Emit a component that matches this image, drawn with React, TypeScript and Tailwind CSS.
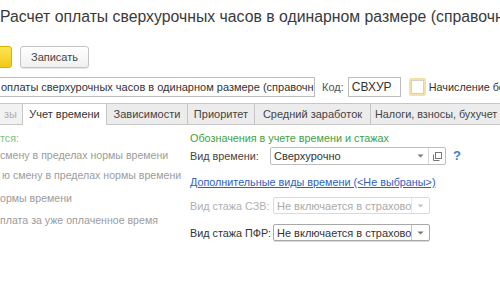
import React from "react";

function Arrow({ color = "#777" }: { color?: string }) {
  return (
    <svg width="7" height="4" viewBox="0 0 7 4">
      <path d="M0.5 0.5 L3.5 3.5 L6.5 0.5 Z" fill={color} />
    </svg>
  );
}

function OpenIcon() {
  return (
    <svg width="11" height="11" viewBox="0 0 11 11" fill="none" stroke="#777" strokeWidth="1">
      <rect x="3.5" y="1.5" width="6" height="6" />
      <path d="M1.5 3.5 V9.5 H7.5" />
    </svg>
  );
}

export default function App() {
  return (
    <div className="w-[500px] h-[300px] overflow-hidden bg-white text-[#333] font-['Liberation_Sans',Arial,sans-serif]">
      {/* Title */}
      <div className="pt-[7px] h-[27px] text-[15.8px] leading-[20px] whitespace-nowrap text-[#3a3a3a]">
        Расчет оплаты сверхурочных часов в одинарном размере (справочно)
      </div>

      {/* Buttons */}
      <div className="mt-[19px] flex items-center h-[22px]">
        <div className="shrink-0 -ml-px w-[13px] h-[22px] rounded-r-[3px] border border-[#d4b300] bg-gradient-to-b from-[#ffe44f] to-[#f2c811]" />
        <div className="shrink-0 ml-[8px] w-[69px] h-[22px] rounded-[3px] border border-[#c4c4c4] bg-gradient-to-b from-white to-[#f0f0f0] text-[11px] text-[#444] flex items-center justify-center shadow-[0_1px_1px_rgba(0,0,0,0.1)]">
          Записать
        </div>
      </div>

      {/* Name row */}
      <div className="mt-[9px] flex items-center h-[20px] text-[11px] whitespace-nowrap">
        <div className="shrink-0 -ml-[1px] w-[316px] h-[20px] border border-[#bdbdbd] pl-[1px] overflow-hidden leading-[18px] text-[#333]">
          оплаты сверхурочных часов в одинарном размере (справочно)
        </div>
        <div className="shrink-0 ml-[7px] text-[#555]">Код:</div>
        <div className="shrink-0 ml-[4px] w-[53px] h-[20px] border border-[#bdbdbd] pl-[3px] leading-[18px] text-[#333] text-[12px]">
          СВХУР
        </div>
        <div className="shrink-0 ml-[8px] w-[17px] h-[18px] rounded-[2px] border-2 border-[#f3e2a4] bg-white flex items-center justify-center">
          <div className="w-[13px] h-[14px] border border-[#d0d0d0] bg-white" />
        </div>
        <div className="shrink-0 ml-[3px] text-[#333] text-[10.8px]">Начисление больничных</div>
      </div>

      {/* Tabs */}
      <div className="mt-[6px] flex h-[22px] text-[11px] whitespace-nowrap">
        <div className="shrink-0 w-[23px] h-[22px] border-y border-r border-[#c6c6c6] bg-[#f2f2f2] text-[#b0b0b0] flex items-center justify-end pr-[5px]">
          зы
        </div>
        <div className="shrink-0 w-[84px] h-[22px] border-t border-r border-[#c6c6c6] bg-white flex items-center justify-center text-[#333]">
          Учет времени
        </div>
        <div className="shrink-0 w-[81px] h-[22px] border-y border-r border-[#c6c6c6] bg-[#ececec] flex items-center justify-center text-[#444]">
          Зависимости
        </div>
        <div className="shrink-0 w-[67px] h-[22px] border-y border-r border-[#c6c6c6] bg-[#ececec] flex items-center justify-center text-[#444]">
          Приоритет
        </div>
        <div className="shrink-0 w-[116px] h-[22px] border-y border-r border-[#c6c6c6] bg-[#ececec] flex items-center justify-center text-[#444]">
          Средний заработок
        </div>
        <div className="shrink-0 w-[140px] h-[22px] border-y border-r border-[#c6c6c6] bg-[#ececec] flex items-center pl-[4px] text-[#444] text-[10.8px]">
          Налоги, взносы, бухучет
        </div>
      </div>

      {/* Content */}
      <div className="flex leading-[14px]">
        <div className="w-[190px] shrink-0 whitespace-nowrap text-[#9c9c9c] text-[10.6px]">
          <div className="mt-[6px] text-[#7cc27c] text-[10.8px]">тся:</div>
          <div className="mt-[3px]">смену в пределах нормы времени</div>
          <div className="mt-[6px] ml-[2px]">ю смену в пределах нормы времени</div>
          <div className="mt-[9px]">ормы времени</div>
          <div className="mt-[8px]">плата за уже оплаченное время</div>
        </div>

        <div className="flex-1 whitespace-nowrap text-[10.8px]">
          <div className="mt-[6px] text-[#3f9f3f]">Обозначения в учете времени и стажах</div>

          <div className="mt-[2px] flex items-center h-[18px]">
            <div className="shrink-0 w-[80px] text-[#444]">Вид времени:</div>
            <div className="shrink-0 w-[176px] h-[18px] border border-[#bdbdbd] rounded-[2px] flex items-center">
              <div className="flex-1 pl-[3px] text-[#333] text-[11px]">Сверхурочно</div>
              <div className="w-[16px] flex items-center justify-center">
                <Arrow />
              </div>
              <div className="w-[17px] h-full border-l border-[#d6d6d6] flex items-center justify-center">
                <OpenIcon />
              </div>
            </div>
            <div className="shrink-0 ml-[7px] text-[#3b7fd0] text-[13px] font-bold">?</div>
          </div>

          <div className="mt-[10px] text-[#2f5fc0] underline">Дополнительные виды времени (&lt;Не выбраны&gt;)</div>

          <div className="mt-[8px] flex items-center h-[17px]">
            <div className="shrink-0 w-[83px] text-[#b0b0b0]">Вид стажа СЗВ:</div>
            <div className="shrink-0 w-[157px] h-[17px] border border-[#dadada] rounded-[2px] flex items-center overflow-hidden">
              <div className="w-[138px] pl-[3px] overflow-hidden text-[#aaaaaa] text-[11px]">Не включается в страховой стаж</div>
              <div className="w-[18px] h-full border-l border-[#e4e4e4] flex items-center justify-center">
                <Arrow color="#c4c4c4" />
              </div>
            </div>
          </div>

          <div className="mt-[10px] flex items-center h-[17px]">
            <div className="shrink-0 w-[83px] text-[#333]">Вид стажа ПФР:</div>
            <div className="shrink-0 w-[157px] h-[17px] border border-[#a8a8a8] rounded-[2px] flex items-center overflow-hidden shadow-[0_1px_0_rgba(0,0,0,0.15)]">
              <div className="w-[138px] pl-[3px] overflow-hidden text-[#333] text-[11px]">Не включается в страховой стаж</div>
              <div className="w-[18px] h-full border-l border-[#c8c8c8] flex items-center justify-center">
                <Arrow color="#777" />
              </div>
            </div>
          </div>
        </div>
      </div>
    </div>
  );
}
